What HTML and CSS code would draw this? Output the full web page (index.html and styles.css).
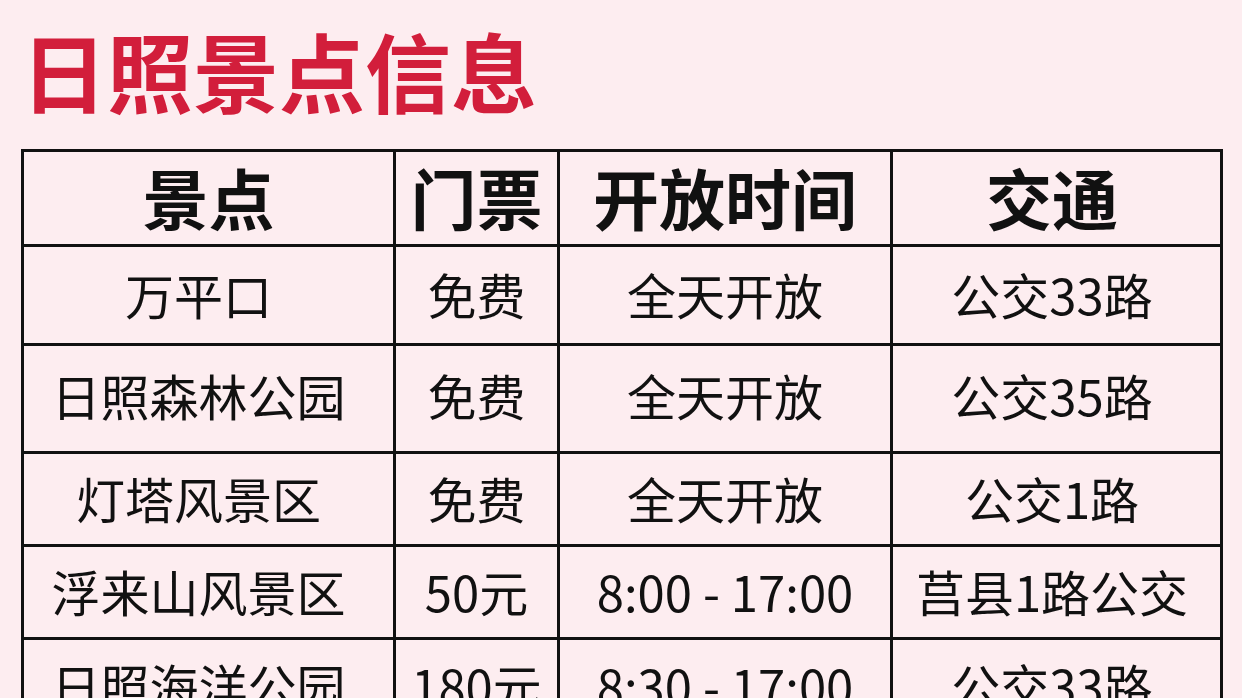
FILE: index.html
```html
<!DOCTYPE html>
<html lang="zh-CN">
<head>
<meta charset="utf-8">
<title>日照景点信息</title>
<link rel="stylesheet" href="styles.css">
</head>
<body>
<main class="page">
  <h1 class="title">日照景点信息</h1>
  <table class="spots">
    <colgroup>
      <col class="c-name">
      <col class="c-ticket">
      <col class="c-time">
      <col class="c-traffic">
    </colgroup>
    <thead>
      <tr class="r-head">
        <th>景点</th><th>门票</th><th>开放时间</th><th class="traffic">交通</th>
      </tr>
    </thead>
    <tbody>
      <tr class="r1"><td class="name">万平口</td><td>免费</td><td>全天开放</td><td class="traffic">公交33路</td></tr>
      <tr class="r2"><td class="name">日照森林公园</td><td>免费</td><td>全天开放</td><td class="traffic">公交35路</td></tr>
      <tr class="r3"><td class="name">灯塔风景区</td><td>免费</td><td>全天开放</td><td class="traffic">公交1路</td></tr>
      <tr class="r4"><td class="name">浮来山风景区</td><td>50元</td><td>8:00 - 17:00</td><td class="traffic">莒县1路公交</td></tr>
      <tr class="r5"><td class="name">日照海洋公园</td><td>180元</td><td>8:30 - 17:00</td><td class="traffic">公交33路</td></tr>
    </tbody>
  </table>
</main>
</body>
</html>
```
FILE: styles.css
```css
html, body {
  margin: 0;
  padding: 0;
  background: #fdedf0;
  overflow: hidden;
}
.page {
  padding: 22px 0 0 21px;
  font-family: "Noto Sans CJK SC", "Noto Sans", sans-serif;
  color: #111;
}
.title {
  margin: 0;
  font-size: 86px;
  line-height: 96px;
  font-weight: 700;
  color: #d21e3b;
  height: 127px;
}
.spots {
  border-collapse: collapse;
  table-layout: fixed;
  width: 1199px;
}
.c-name { width: 372px; }
.c-ticket { width: 164px; }
.c-time { width: 333px; }
.c-traffic { width: 330px; }
.spots th,
.spots td {
  border: 3px solid #111;
  text-align: center;
  vertical-align: middle;
  padding: 0 0 4px 0;
  white-space: nowrap;
}
.spots th {
  font-size: 66px;
  font-weight: 700;
  line-height: 1;
}
.spots td {
  font-size: 49px;
  font-weight: 400;
  line-height: 1;
}
.spots .name { padding-right: 20px; }
.spots .traffic { padding-right: 9px; }
.r-head { height: 95px; }
.r1 { height: 99px; }
.r2 { height: 108px; }
.r2 td { padding-bottom: 8px; }
.r3 { height: 93px; }
.r4 { height: 93px; }
.r5 { height: 95px; }
```
